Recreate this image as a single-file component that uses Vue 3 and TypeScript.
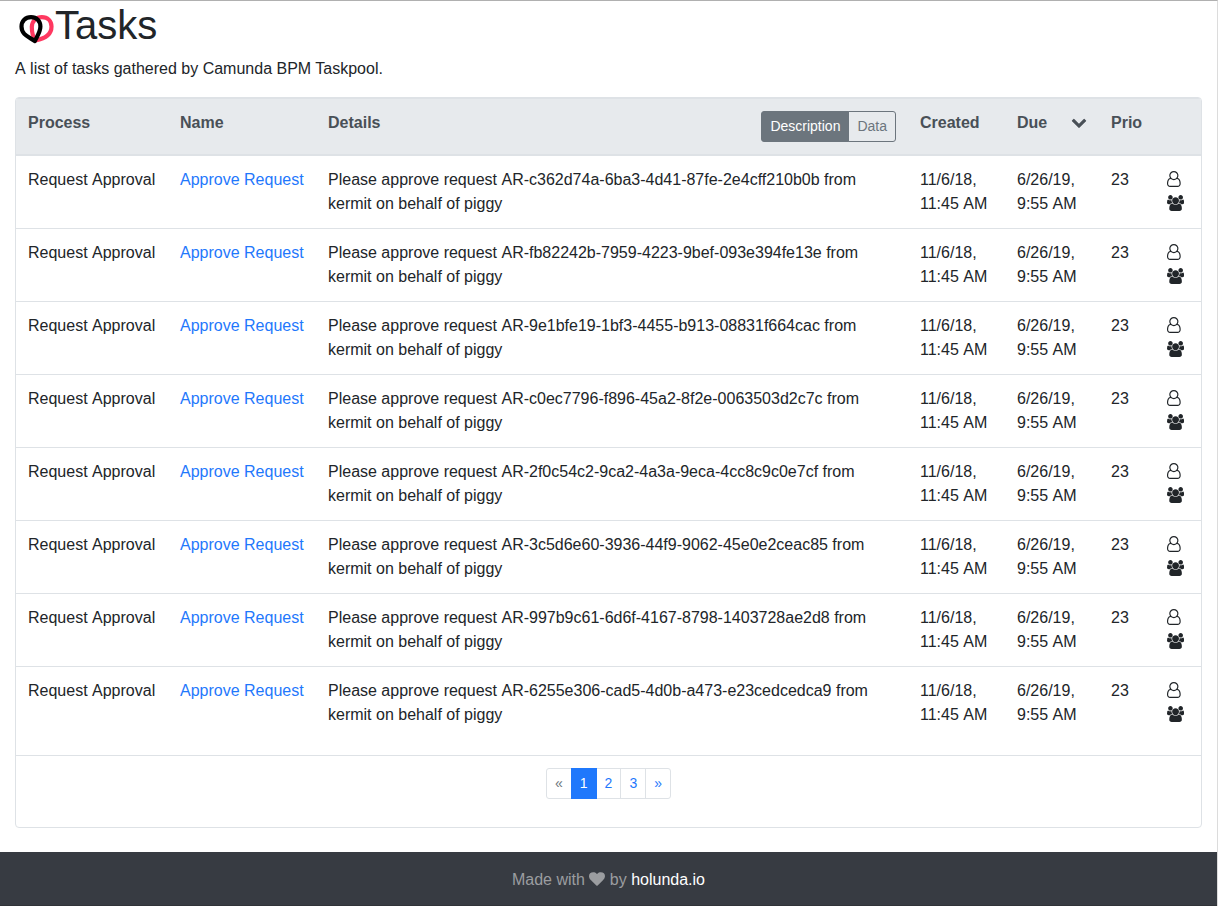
<script setup lang="ts">
interface Task {
  id: string
  name: string
  created: string
  due: string
  prio: number
}

const ids: string[] = [
  'c362d74a-6ba3-4d41-87fe-2e4cff210b0b',
  'fb82242b-7959-4223-9bef-093e394fe13e',
  '9e1bfe19-1bf3-4455-b913-08831f664cac',
  'c0ec7796-f896-45a2-8f2e-0063503d2c7c',
  '2f0c54c2-9ca2-4a3a-9eca-4cc8c9c0e7cf',
  '3c5d6e60-3936-44f9-9062-45e0e2ceac85',
  '997b9c61-6d6f-4167-8798-1403728ae2d8',
  '6255e306-cad5-4d0b-a473-e23cedcedca9',
]

const tasks: Task[] = ids.map((id) => ({
  id,
  name: 'Approve Request',
  created: '11/6/18, 11:45',
  due: '6/26/19, 9:55',
  prio: 23,
}))

const pages: string[] = ['«', '1', '2', '3', '»']
</script>

<template>
  <div class="page">
    <main class="container">
      <h1 class="title">
        <svg class="logo" viewBox="0 0 40 32" aria-hidden="true">
          <path class="drop red" d="M20.5 27.400C17.500 23.500 16.800 18 16.800 13.700C17.400 7.500 21.400 4.200 26.800 4.200C32.600 4.200 36.500 8 36.500 13.600C36.500 22 29 25.900 20.500 27.400Z" />
          <path class="drop black" d="M19.800 28C14 23.800 6.500 22 6.500 13.500C6.500 8 10.400 4.100 16 4.100C21.600 4.100 25.400 8 25.400 13.500C25.400 19 22.200 23 19.800 28Z" />
        </svg>
        <span>Tasks</span>
      </h1>
      <p class="lead"><span class="word">A</span> list of tasks gathered by Camunda BPM Taskpool.</p>

      <section class="card">
        <table class="tasks">
          <colgroup>
            <col class="c-process" /><col class="c-name" /><col class="c-details" /><col class="c-created" />
            <col class="c-due" /><col class="c-prio" /><col class="c-who" />
          </colgroup>
          <thead>
            <tr>
              <th>Process</th>
              <th>Name</th>
              <th>
                <div class="split">
                  <span>Details</span>
                  <div class="toggle">
                    <button type="button" class="active">Description</button>
                    <button type="button">Data</button>
                  </div>
                </div>
              </th>
              <th>Created</th>
              <th>
                <div class="split">
                  <span>Due</span>
                  <svg class="chevron" viewBox="0 0 1792 1792"><path d="M1683 808l-742 741q-19 19-45 19t-45-19l-742-741q-19-19-19-45.500t19-45.500l166-165q19-19 45-19t45 19l531 531 531-531q19-19 45-19t45 19l166 165q19 19 19 45.500t-19 45.500z" /></svg>
                </div>
              </th>
              <th>Prio</th>
              <th></th>
            </tr>
          </thead>
          <tbody>
            <tr v-for="task in tasks" :key="task.id">
              <td>Request <span class="word">Approval</span></td>
              <td><a href="#">{{ task.name }}</a></td>
              <td>Please approve request <span class="word">AR-{{ task.id }}</span> from kermit on behalf of piggy</td>
              <td>{{ task.created }} <span class="word">AM</span></td>
              <td>{{ task.due }} <span class="word">AM</span></td>
              <td>{{ task.prio }}</td>
              <td>
                <div class="who">
                  <svg class="user" viewBox="0 0 1536 1792"><path d="M1201 784q47 14 89.500 38t89 73 79.500 115.500 55 172 22 236.500q0 154-100 263.500t-241 109.500h-854q-141 0-241-109.500t-100-263.500q0-131 22-236.500t55-172 79.500-115.500 89-73 89.500-38q-79-125-79-272 0-104 40.500-198.500t109.500-163.500 163.500-109.500 198.500-40.500 198.500 40.500 163.500 109.500 109.500 163.500 40.500 198.500q0 147-79 272zm-433-656q-159 0-271.500 112.500t-112.500 271.500 112.500 271.500 271.500 112.500 271.500-112.500 112.500-271.500-112.500-271.500-271.500-112.500zm427 1536q88 0 150.500-71.500t62.500-173.500q0-239-78.500-377t-225.500-145q-145 127-336 127t-336-127q-147 7-225.500 145t-78.500 377q0 102 62.500 173.500t150.500 71.500h854z" /></svg>
                  <svg class="users" viewBox="-64 0 1920 1792"><path d="M529 896q-162 5-265 128h-134q-82 0-138-40.500t-56-118.500q0-353 124-353 6 0 43.500 21t97.500 42.500 119 21.500q67 0 133-23-5 37-5 66 0 139 81 256zm1071 637q0 120-73 189.500t-194 69.500h-874q-121 0-194-69.500t-73-189.500q0-53 3.500-103.500t14-109 26.500-108.500 43-97.500 62-81 85.500-53.500 111.500-20q10 0 43 21.500t73 48 107 48 135 21.500 135-21.500 107-48 73-48 43-21.500q61 0 111.500 20t85.500 53.500 62 81 43 97.500 26.500 108.500 14 109 3.500 103.500zm-1024-1277q0 106-75 181t-181 75-181-75-75-181 75-181 181-75 181 75 75 181zm704 384q0 159-112.500 271.500t-271.500 112.500-271.500-112.500-112.500-271.500 112.500-271.500 271.500-112.500 271.500 112.500 112.500 271.500zm576 225q0 78-56 118.500t-138 40.500h-134q-103-123-265-128 81-117 81-256 0-29-5-66 66 23 133 23 59 0 119-21.500t97.500-42.500 43.500-21q124 0 124 353zm-128-609q0 106-75 181t-181 75-181-75-75-181 75-181 181-75 181 75 75 181z" /></svg>
                </div>
              </td>
            </tr>
          </tbody>
        </table>
        <nav class="pager">
          <a v-for="(p, i) in pages" :key="p" href="#" :class="{ disabled: i === 0, current: i === 1 }">{{ p }}</a>
        </nav>
      </section>
    </main>

    <footer class="footer">
      <span>Made with <svg class="heart" viewBox="0 0 1792 1792"><path d="M896 1664q-26 0-44-18l-624-602q-10-8-27.500-26t-55.500-65.500-68-97.500-53.500-121-23.500-138q0-220 127-344t351-124q62 0 126.500 21.500t120 58 95.500 68.500 76 68q36-36 76-68t95.500-68.500 120-58 126.500-21.500q224 0 351 124t127 344q0 221-229 450l-623 600q-18 18-44 18z" /></svg> by <a href="#">holunda.io</a></span>
    </footer>
  </div>
</template>

<style>
body {
  margin: 0;
  overflow: hidden;
}
</style>

<style scoped>
.page,
.page * {
  box-sizing: border-box;
}
.page {
  display: flex;
  flex-direction: column;
  width: 1218px;
  height: 906px;
  border-top: 1px solid #b0b0b0;
  border-right: 1px solid #dcdcdc;
  background: #fff;
  color: #212529;
  font: 16px/24px "Liberation Sans", Arial, sans-serif;
}
.container {
  flex: 1;
  padding: 0 15px;
}
.title {
  display: flex;
  margin: 0 0 8px;
  font-size: 40px;
  font-weight: 500;
  line-height: 48px;
}
.logo {
  width: 40px;
  height: 32px;
  margin-top: 12px;
}
.drop {
  fill: none;
  stroke-width: 4.2;
  stroke-linejoin: round;
}
.red { stroke: #ff3860; }
.black { stroke: #000; }
.lead {
  margin: 0 0 16px;
}
.word {
  display: inline-block;
}
.card {
  height: 731px;
  border: 1px solid #dee2e6;
  border-radius: 4px;
  overflow: hidden;
}
.tasks {
  width: 100%;
  margin-bottom: 16px;
  table-layout: fixed;
  border-collapse: separate;
  border-spacing: 0;
}
.c-process { width: 152px; }
.c-name { width: 148px; }
.c-details { width: 592px; }
.c-created { width: 97px; }
.c-due { width: 94px; }
.c-prio { width: 56px; }
.c-who { width: 46px; }
th,
td {
  padding: 12px;
  text-align: left;
  vertical-align: top;
  border-top: 1px solid #dee2e6;
}
th {
  background: #e7eaed;
  color: #495057;
  border-bottom: 2px solid #dee2e6;
}
tbody tr:first-child td {
  border-top: 0;
}
a {
  color: #1f78fc;
  text-decoration: none;
}
.split {
  display: flex;
  justify-content: space-between;
}
.toggle {
  display: flex;
}
.toggle button {
  height: 31px;
  padding: 4px 8px;
  border: 1px solid #6c757d;
  border-radius: 0 3px 3px 0;
  background: transparent;
  color: #6c757d;
  font: 14px/21px "Liberation Sans", Arial, sans-serif;
}
.toggle .active {
  margin-right: -1px;
  border-radius: 3px 0 0 3px;
  background: #6c757d;
  color: #fff;
}
svg {
  fill: currentColor;
}
.chevron {
  width: 16px;
  height: 16px;
  margin-top: 3px;
}
.who {
  display: flex;
  flex-direction: column;
  gap: 8px;
  padding-top: 3px;
}
.user {
  width: 13.710px;
  height: 16px;
}
.users {
  width: 17.140px;
  height: 16px;
}
.pager {
  display: flex;
  justify-content: center;
  padding-top: 12px;
  border-top: 1px solid #dee2e6;
}
.pager a {
  height: 31px;
  margin-left: -1px;
  padding: 4px 8px;
  border: 1px solid #dee2e6;
  font-size: 14px;
  line-height: 21px;
}
.pager a:first-child {
  margin-left: 0;
  border-radius: 3px 0 0 3px;
}
.pager a:last-child { border-radius: 0 3px 3px 0; }
.pager .disabled { color: #6c757d; }
.pager .current {
  position: relative;
  border-color: #1f78fc;
  background: #1f78fc;
  color: #fff;
}
.footer {
  height: 54px;
  padding-top: 16px;
  background: #373b42;
  border-bottom: 1px solid #303338;
  color: #9b9da0;
  text-align: center;
}
.footer a {
  color: #fff;
}
.heart {
  width: 16px;
  height: 16px;
  vertical-align: -2px;
}
</style>
